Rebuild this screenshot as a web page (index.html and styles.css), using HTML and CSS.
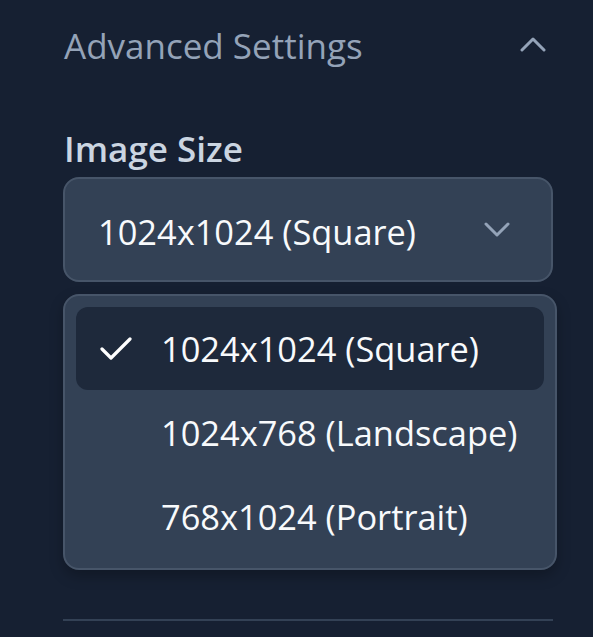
FILE: index.html
```html
<!DOCTYPE html>
<html lang="en">
<head>
<meta charset="utf-8">
<title>Advanced Settings</title>
<link rel="stylesheet" href="styles.css">
</head>
<body>
<div class="panel">
  <div class="section-head">
    <span class="section-title">Advanced Settings</span>
    <svg class="chev-up" width="26" height="16" viewBox="0 0 26 16" fill="none" stroke="currentColor" stroke-width="3" stroke-linecap="round" stroke-linejoin="round"><path d="M2 14 L13 3 L24 14"/></svg>
  </div>
  <div class="field-label">Image Size</div>
  <div class="select">
    <span class="select-value">1024x1024 (Square)</span>
    <svg class="chev-down" width="26" height="16" viewBox="0 0 26 16" fill="none" stroke="currentColor" stroke-width="3" stroke-linecap="round" stroke-linejoin="round"><path d="M2 3 L13 14 L24 3"/></svg>
  </div>
  <ul class="menu">
    <li class="option selected">
      <svg class="check" width="32" height="24" viewBox="0 0 32 24" fill="none" stroke="currentColor" stroke-width="3.2" stroke-linecap="round" stroke-linejoin="round"><path d="M2 12 L11 21 L30 2"/></svg>
      <span class="option-text">1024x1024 (Square)</span>
    </li>
    <li class="option"><span class="option-text">1024x768 (Landscape)</span></li>
    <li class="option"><span class="option-text">768x1024 (Portrait)</span></li>
  </ul>
  <div class="divider"></div>
</div>
</body>
</html>
```

FILE: styles.css
```css
html, body {
  margin: 0;
  padding: 0;
  background: #162032;
}
body {
  font-family: "Open Sans", "Noto Sans", sans-serif;
  color: #f1f5f9;
}
.panel {
  width: 490px;
  margin-left: 63px;
  display: flex;
  flex-direction: column;
}
.section-head {
  display: flex;
  align-items: center;
  justify-content: space-between;
  height: 50px;
  margin-top: 21px;
  padding-left: 1px;
}
.section-title {
  font-size: 35px;
  line-height: 50px;
  color: #94a3b8;
}
.chev-up {
  color: #94a3b8;
  margin-right: 7px;
  margin-top: -4px;
}
.field-label {
  margin-top: 56px;
  padding-left: 1px;
  font-size: 35px;
  line-height: 44px;
  font-weight: 600;
  color: #cbd5e1;
}
.select {
  margin-top: 6px;
  box-sizing: border-box;
  height: 105px;
  border: 2px solid #475569;
  border-radius: 16px;
  background: #334155;
  display: flex;
  align-items: center;
  justify-content: space-between;
  padding: 0 41px 0 33px;
}
.select-value {
  font-size: 34.4px;
  color: #f8fafc;
  margin-top: 4px;
}
.chev-down {
  color: #94a3b8;
  margin-top: -2px;
}
.menu {
  list-style: none;
  margin: 12px -4px 0 0;
  padding: 11px;
  box-sizing: border-box;
  height: 276px;
  border: 2px solid #475569;
  border-radius: 16px;
  background: #334155;
  display: flex;
  flex-direction: column;
  gap: 1px;
  box-shadow: 0 6px 14px rgba(0,0,0,0.25);
}
.option {
  height: 83px;
  border-radius: 12px;
  display: flex;
  align-items: center;
  position: relative;
  padding-left: 85px;
}
.option.selected {
  background: #1e293b;
}
.check {
  position: absolute;
  left: 24px;
  top: 30px;
  color: #ffffff;
}
.option-text {
  font-size: 34.4px;
  color: #f8fafc;
  margin-top: 1px;
}
.divider {
  margin-top: 49px;
  height: 2px;
  background: #334155;
}
```
